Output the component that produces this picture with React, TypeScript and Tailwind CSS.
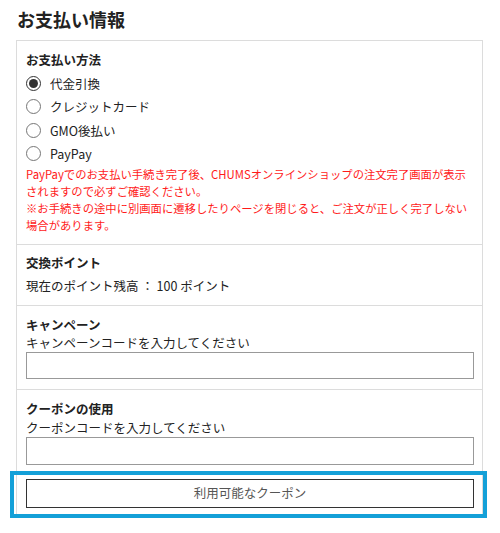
import React from "react";

const font = { fontFamily: '"Noto Sans CJK JP", "Noto Sans", sans-serif' };

function Radio({ checked, label }: { checked?: boolean; label: string }) {
  return (
    <div className="flex h-[23.5px] items-center">
      <span
        className={
          "flex h-[15px] w-[15px] items-center justify-center rounded-full border bg-white " +
          (checked ? "border-[#333]" : "border-[#767676]")
        }
      >
        {checked && <span className="h-[9px] w-[9px] rounded-full bg-[#333]" />}
      </span>
      <span className="ml-[9px] text-[12.5px] leading-[19px] text-[#222]">{label}</span>
    </div>
  );
}

export default function App() {
  return (
    <div className="min-h-[533px] bg-white pl-4" style={font}>
      <h1 className="pl-[1px] pt-[6px] text-[18px] font-bold leading-[27px] text-[#222]">お支払い情報</h1>
      <div className="mt-[7px] w-[467px] border border-[#dcdcdc]">
        {/* 支払い方法 */}
        <div className="pb-[9px] pl-[9px] pr-[8px] pt-[8.5px]">
          <div className="mb-[3px] text-[12.5px] font-bold leading-[19px] text-[#222]">お支払い方法</div>
          <Radio checked label="代金引換" />
          <Radio label="クレジットカード" />
          <Radio label="GMO後払い" />
          <Radio label="PayPay" />
          <p className="text-[11.33px] leading-[17.3px] text-[#ff1a1a]">
            PayPayでのお支払い手続き完了後、CHUMSオンラインショップの注文完了画面が表示されますので必ずご確認ください。
            <br />
            ※お手続きの途中に別画面に遷移したりページを閉じると、ご注文が正しく完了しない場合があります。
          </p>
        </div>
        {/* 交換ポイント */}
        <div className="border-t border-[#dcdcdc] pb-[10px] pl-[9px] pr-[8px] pt-[8.5px]">
          <div className="text-[12.5px] font-bold leading-[19px] text-[#222]">交換ポイント</div>
          <div className="mt-[3.5px] text-[12.5px] leading-[19px] text-[#222]">現在のポイント残高 ： 100 ポイント</div>
        </div>
        {/* キャンペーン */}
        <div className="border-t border-[#dcdcdc] pb-[10px] pl-[9px] pr-[8px] pt-[9px]">
          <div className="text-[12.5px] font-bold leading-[19px] text-[#222]">キャンペーン</div>
          <div className="text-[12.5px] leading-[18px] text-[#222]">キャンペーンコードを入力してください</div>
          <input className="mt-[0.5px] block h-[27px] w-full border border-[#999] bg-white outline-none" />
        </div>
        {/* クーポン */}
        <div className="border-t border-[#dcdcdc] pb-[6px] pl-[9px] pr-[8px] pt-[8.5px]">
          <div className="text-[12.5px] font-bold leading-[19px] text-[#222]">クーポンの使用</div>
          <div className="text-[12.5px] leading-[19px] text-[#222]">クーポンコードを入力してください</div>
          <input className="block h-[28px] w-full border border-[#999] bg-white outline-none" />
        </div>
        {/* 利用可能なクーポン */}
        <div className="relative border-t border-[#dcdcdc] pb-[6px] pl-[9px] pr-[8px] pt-[7px]">
          <button className="flex h-[29px] w-full items-center justify-center border-[1.5px] border-[#333] bg-white text-[12.5px] text-[#555]">
            利用可能なクーポン
          </button>
          <div className="pointer-events-none absolute bottom-[-4px] left-[-7px] right-[-5px] top-[-1px] border-4 border-[#14a0d8]" />
        </div>
      </div>
    </div>
  );
}
